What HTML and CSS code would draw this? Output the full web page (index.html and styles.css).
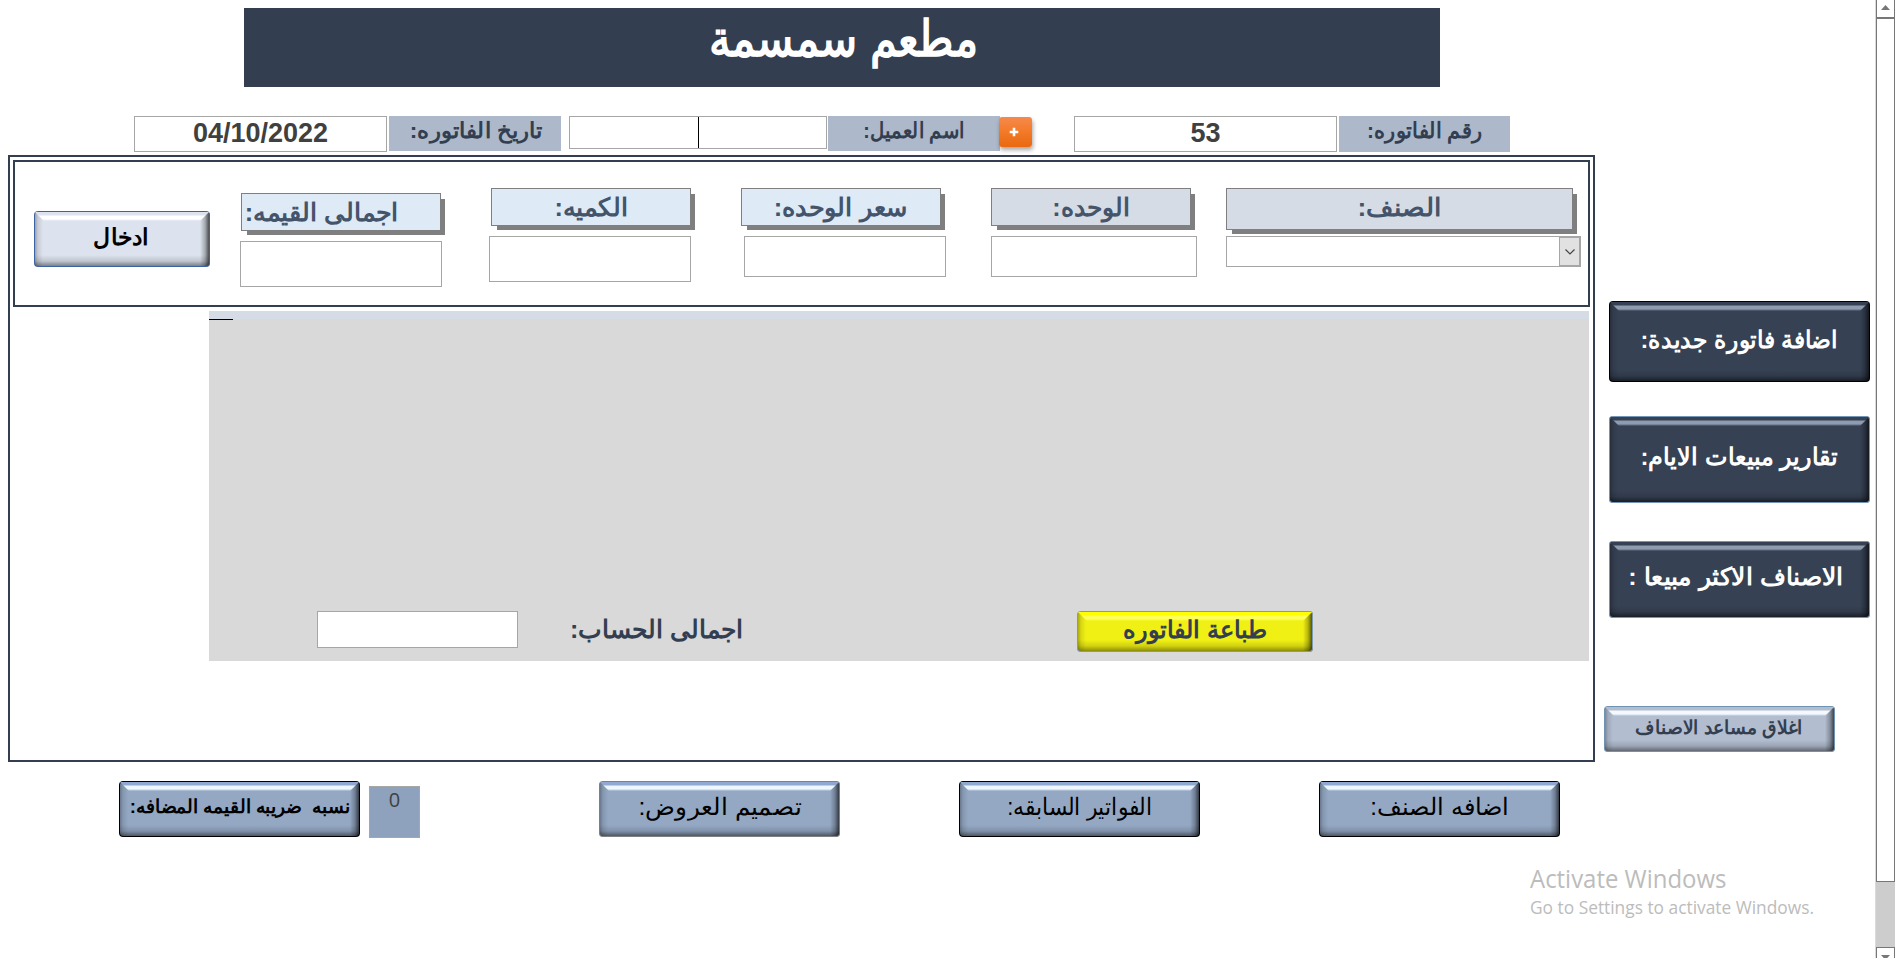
FILE: index.html
```html
<!DOCTYPE html>
<html lang="ar">
<head>
<meta charset="utf-8">
<title>مطعم سمسمة</title>
<link rel="stylesheet" href="styles.css">
</head>
<body>
<div class="window">
  <main class="form">
    <h1 class="title"><span class="t">مطعم سمسمة</span></h1>

    <section class="invoice-head">
      <div class="box date-value">04/10/2022</div>
      <div class="tag tag-date"><span class="t">تاريخ الفاتوره:</span></div>
      <div class="box customer"><i class="caret"></i></div>
      <div class="tag tag-customer"><span class="t">اسم العميل:</span></div>
      <button class="plus"><svg width="10" height="10" viewBox="0 0 10 10"><path d="M5 0.7V9.3M0.7 5H9.3" stroke="#fff" stroke-width="2.6"/></svg></button>
      <div class="box number-value">53</div>
      <div class="tag tag-number"><span class="t">رقم الفاتوره:</span></div>
    </section>

    <div class="middle">
      <section class="frame">
        <div class="entry">
          <button class="btn enter"><span class="t">ادخال</span></button>
          <div class="col col-total">
            <div class="head blue"><span class="t">اجمالى القيمه:</span></div>
            <div class="box"></div>
          </div>
          <div class="col col-qty">
            <div class="head blue"><span class="t">الكميه:</span></div>
            <div class="box"></div>
          </div>
          <div class="col col-price">
            <div class="head blue"><span class="t">سعر الوحده:</span></div>
            <div class="box"></div>
          </div>
          <div class="col col-unit">
            <div class="head"><span class="t">الوحده:</span></div>
            <div class="box"></div>
          </div>
          <div class="col col-item">
            <div class="head"><span class="t">الصنف:</span></div>
            <div class="box combo"><span class="drop"><svg width="10" height="6" viewBox="0 0 10 6"><path d="M0.5 0.5L5 5L9.5 0.5" fill="none" stroke="#444" stroke-width="1.2"/></svg></span></div>
          </div>
        </div>
        <div class="grid">
          <div class="grid-head"></div>
          <div class="grid-line"></div>
          <div class="grid-foot">
            <div class="box sum"></div>
            <div class="sum-label"><span class="t">اجمالى الحساب:</span></div>
            <button class="btn print"><span class="t">طباعة الفاتوره</span></button>
          </div>
        </div>
      </section>
      <aside class="side">
        <button class="btn navy black-edge s1"><span class="t">اضافة فاتورة جديدة:</span></button>
        <button class="btn navy s2"><span class="t">تقارير مبيعات الايام:</span></button>
        <button class="btn navy s3"><span class="t">الاصناف الاكثر مبيعا :</span></button>
        <button class="btn close"><span class="t">اغلاق مساعد الاصناف</span></button>
      </aside>
    </div>

    <nav class="bottom">
      <button class="btn steel black-edge b1"><span class="t">نسبه&nbsp; ضريبه القيمه المضافه:</span></button>
      <div class="tax">0</div>
      <button class="btn steel gray-edge b2"><span class="t">تصميم العروض:</span></button>
      <button class="btn steel black-edge b3"><span class="t">الفواتير السابقه:</span></button>
      <button class="btn steel black-edge b4"><span class="t">اضافه الصنف:</span></button>
    </nav>

    <div class="watermark">
      <p class="w1"><span>Activate Windows</span></p>
      <p class="w2"><span>Go to Settings to activate Windows.</span></p>
    </div>
  </main>

  <div class="scrollbar">
    <div class="arrow up"><svg width="9" height="5" viewBox="0 0 9 5"><path d="M4.5 0L9 5H0Z" fill="#777"/></svg></div>
    <div class="thumb"></div>
    <div class="track"></div>
    <div class="arrow down"><svg width="9" height="5" viewBox="0 0 9 5"><path d="M0 0H9L4.5 5Z" fill="#777"/></svg></div>
  </div>
</div>
</body>
</html>
```
FILE: styles.css
```css
* { box-sizing: border-box; }

body {
  margin: 0;
  background: #fff;
  font-family: "Liberation Sans", sans-serif;
  font-weight: bold;
  color: #333f50;
}

button {
  padding: 0;
  border: 0;
  font: inherit;
  color: inherit;
}

.window {
  display: flex;
  width: 1895px;
  height: 958px;
  overflow: hidden;
}

.form {
  display: flex;
  flex-direction: column;
  align-items: flex-start;
  width: 1875px;
}

/* Arabic captions, fitted to their width by --sx */
.t {
  display: inline-block;
  direction: rtl;
  white-space: nowrap;
  transform: scaleX(var(--sx, 1));
}

.title {
  width: 1196px;
  height: 79px;
  margin: 8px 0 0 244px;
  padding-left: 2px;
  background: #333f50;
  color: #fff;
  font-size: 50px;
  line-height: 63px;
  text-align: center;
  --sx: .865;
}

.box {
  border: 1px solid #a6a6a6;
  background: #fff;
}

/* invoice header row */
.invoice-head {
  display: flex;
  align-items: flex-start;
  height: 39px;
  margin: 29px 0 0 134px;
}

.date-value,
.number-value {
  height: 36px;
  color: #404040;
  font-size: 27px;
  line-height: 33px;
  text-align: center;
}
.date-value { width: 253px; }
.number-value { width: 263px; margin-left: 42px; }

.tag {
  display: flex;
  justify-content: center;
  height: 35px;
  background: #adb9ca;
  font-size: 22px;
  line-height: 29px;
}
.tag-date { width: 172px; margin-left: 2px; padding-left: 2px; --sx: 1.035; }
.tag-customer { width: 172px; margin-left: 1px; --sx: .89; }
.tag-number { width: 171px; height: 36px; margin-left: 2px; padding-left: 1px; --sx: .95; }

.customer {
  display: flex;
  justify-content: center;
  width: 258px;
  height: 33px;
  margin-left: 8px;
}
.caret { width: 1px; background: #000; }

.plus {
  display: flex;
  align-items: center;
  justify-content: center;
  width: 33px;
  height: 30px;
  margin: 1px 0 0 -1px;
  padding-right: 3px;
  border-radius: 3px;
  background: linear-gradient(#f58a4c, #f47b2a 45%, #e8690f);
  box-shadow: 1px 3px 4px rgba(0, 0, 0, .35);
}

/* framed area */
.middle {
  display: flex;
  align-items: flex-start;
  margin-left: 8px;
}

.frame {
  width: 1587px;
  height: 607px;
  padding: 3px;
  border: 2px solid #333f50;
}

.entry {
  display: flex;
  align-items: flex-start;
  width: 1577px;
  height: 147px;
  border: 2px solid #333f50;
  padding-top: 26px;
}

.enter {
  width: 176px;
  height: 56px;
  margin: 23px 0 0 19px;
  padding-right: 2px;
  --face: #dde3ee;
  --edge: #3c62a5;
  --shine: #fff;
  --low: rgba(0, 0, 0, .5);
  color: #000;
  font-size: 23px;
  line-height: 52px;
  --sx: 1.02;
}

.head {
  display: flex;
  justify-content: center;
  width: 200px;
  height: 38px;
  border: 1px solid #7f7f7f;
  background: #d6dce5;
  box-shadow: 5px 5px 0 -1px #7f7f7f;
  color: #44546a;
  font-size: 25px;
  line-height: 37px;
  overflow: hidden;
}
.head.blue { background: #deebf7; }

.col .box { margin-top: 10px; }
.col-total { margin: 5px 0 0 30px; --sx: 1.015; }
.col-total .head { margin-left: 1px; padding-right: 39px; line-height: 37px; }
.col-total .box { width: 202px; height: 46px; }
.col-qty { margin-left: 47px; --sx: 1.015; }
.col-qty .head { margin-left: 2px; }
.col-qty .box { width: 202px; height: 46px; }
.col-price { margin-left: 50px; --sx: 1.02; }
.col-price .box { width: 202px; height: 41px; margin-left: 3px; }
.col-unit { margin-left: 45px; }
.col-unit .box { width: 206px; height: 41px; }
.col-item { margin-left: 29px; --sx: 1.06; }
.col-item .head { width: 347px; height: 42px; }
.col-item .box { width: 355px; height: 31px; margin-top: 6px; }

.combo { display: flex; justify-content: flex-end; }
.drop {
  display: flex;
  align-items: center;
  justify-content: center;
  width: 21px;
  border: 1px solid #a6a6a6;
  background: #e1e1e1;
}

.grid {
  width: 1380px;
  height: 350px;
  margin: 4px 0 0 196px;
  background: #d9d9d9;
}
.grid-head { height: 8px; background: #d6dce5; }
.grid-line { width: 24px; height: 1px; background: #000; }
.grid-foot {
  display: flex;
  align-items: flex-start;
  padding: 291px 0 0 108px;
}
.sum { width: 201px; height: 37px; }
.sum-label {
  width: 173px;
  margin: 6px 0 0 52px;
  text-align: center;
  font-size: 25px;
  line-height: 25px;
}
.print {
  width: 236px;
  height: 41px;
  margin-left: 334px;
  --face: #f0f014;
  --edge: #7d9bb5;
  --shine: #ffff5a;
  --rim: #ffff00;
  --low: rgba(70, 70, 0, .65);
  font-size: 24px;
  line-height: 37px;
}

/* beveled button */
.btn {
  position: relative;
  display: flex;
  justify-content: center;
  flex: none;
  border-radius: 4px;
  background:
    linear-gradient(to left, rgba(0, 0, 0, .75), rgba(0, 0, 0, .25) 5px, transparent 10px),
    linear-gradient(to top, var(--low), rgba(0, 0, 0, .13) 6px, transparent 12px),
    linear-gradient(to right, rgba(0, 0, 0, .35), rgba(0, 0, 0, .1) 4px, transparent 9px),
    var(--face);
  box-shadow: inset 0 0 0 1px var(--edge);
}
.btn::before {
  content: "";
  position: absolute;
  inset: 1px 1px auto;
  height: 9px;
  background: linear-gradient(var(--rim, var(--face)) 3px, var(--shine) 4px, var(--shine) 7px, var(--face));
  clip-path: polygon(0 0, 100% 0, calc(100% - 9px) 100%, 9px 100%);
}

.side {
  display: flex;
  flex-direction: column;
  margin: 146px 0 0 14px;
  color: #fff;
  font-size: 24px;
}
.navy {
  width: 261px;
  --face: #364153;
  --edge: #7396b8;
  --shine: #8e9bb1;
  --low: rgba(0, 0, 0, .6);
}
.black-edge { --edge: #000; }
.gray-edge { --edge: #808080; }
.s1 { height: 81px; line-height: 77px; --sx: .975; }
.s2 { height: 87px; margin-top: 34px; line-height: 81px; --sx: .995; }
.s3 { height: 77px; margin-top: 38px; line-height: 71px; padding-right: 8px; --sx: 1.045; }
.close {
  width: 231px;
  height: 46px;
  margin: 88px 0 0 -5px;
  padding-right: 1px;
  --face: #b2bdd0;
  --edge: #6f93b3;
  --shine: #f4f9ff;
  --low: rgba(0, 0, 0, .5);
  color: #333f50;
  font-size: 19px;
  line-height: 43px;
  --sx: .985;
}

/* bottom commands */
.bottom {
  display: flex;
  align-items: flex-start;
  margin: 19px 0 0 119px;
  color: #000;
  font-size: 24px;
  font-weight: normal;
  line-height: 51px;
}
.steel {
  width: 241px;
  height: 56px;
  --face: #94a8c4;
  --rim: #8fa9d0;
  --shine: #eef7ff;
  --low: rgba(0, 0, 0, .55);
}
.b1 { font-size: 19px; font-weight: bold; line-height: 52px; --sx: .985; }
.b2 { margin-left: 179px; padding-left: 2px; --sx: 1.03; }
.b3 { margin-left: 119px; --sx: .91; }
.b4 { margin-left: 119px; --sx: 1; }
.tax {
  width: 51px;
  height: 52px;
  margin: 5px 0 0 9px;
  border: 1px solid #a6a6a6;
  background: #8ea2be;
  color: #404040;
  font-family: "Open Sans", sans-serif;
  font-size: 20px;
  line-height: 25px;
  text-align: center;
}

.watermark {
  margin: 24px 0 0 1530px;
  color: #bcbcbc;
  font-family: "Open Sans", sans-serif;
  font-weight: normal;
}
.watermark p { margin: 0; white-space: nowrap; }
.watermark span { display: inline-block; transform-origin: left; transform: scaleX(var(--sx, 1)); }
.w1 { font-size: 25px; line-height: 32px; --sx: .957; }
.w2 { font-size: 18px; line-height: 26px; --sx: .963; }

/* scrollbar */
.scrollbar {
  display: flex;
  flex-direction: column;
  width: 20px;
  height: 958px;
  border-left: 1px solid #dadada;
}
.arrow {
  display: flex;
  flex: none;
  justify-content: center;
  height: 18px;
  border: 1px solid #777;
  background: #fff;
}
.up { padding-top: 5px; border-top: 0; }
.down { height: 11px; padding-top: 7px; border-bottom: 0; overflow: hidden; }
.down svg { flex: none; }
.thumb { flex: none; height: 864px; border: 1px solid #777; }
.track { flex: 1; background: #cdcdcd; }
```
